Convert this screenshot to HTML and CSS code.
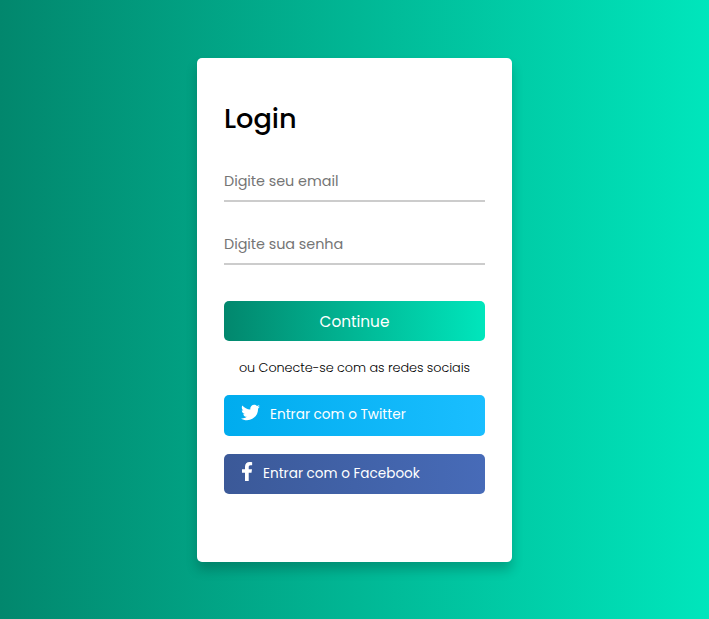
FILE: index.html
```html
<!DOCTYPE html>
<html lang="pt-BR">
<head>
<meta charset="utf-8">
<title>Login</title>
<link rel="stylesheet" href="styles.css">
</head>
<body>
<main class="card">
  <h1 class="title">Login</h1>
  <div class="field email"><span>Digite seu email</span></div>
  <div class="field password"><span>Digite sua senha</span></div>
  <button class="submit"><span>Continue</span></button>
  <p class="alt"><span>ou Conecte-se com as redes sociais</span></p>
  <a class="social twitter">
    <svg class="bird" viewBox="0 0 512 512"><path d="M459.4 151.7c.3 4.500.3 9.100.3 13.600 0 138.700-105.600 298.600-298.600 298.600-59.500 0-114.700-17.200-161.100-47.100 8.400 1 16.600 1.300 25.300 1.300 49.100 0 94.200-16.600 130.300-44.800-46.100-1-84.800-31.200-98.100-72.800 6.500 1 13 1.600 19.800 1.600 9.400 0 18.800-1.300 27.600-3.600-48.100-9.700-84.100-52-84.100-103v-1.300c14 7.800 30.200 12.700 47.400 13.300-28.300-18.800-46.800-51-46.800-87.400 0-19.500 5.200-37.400 14.300-53 51.700 63.700 129.300 105.300 216.400 109.800-1.600-7.800-2.600-15.900-2.600-24 0-57.800 46.800-104.900 104.900-104.900 30.200 0 57.500 12.700 76.700 33.100 23.700-4.500 46.500-13.300 66.600-25.300-7.800 24.400-24.400 44.800-46.100 57.800 21.100-2.300 41.600-8.100 60.400-16.200-14.300 20.800-32.200 39.300-52.600 54.300z"/></svg>
    <span>Entrar com o Twitter</span>
  </a>
  <a class="social facebook">
    <svg class="f" viewBox="22.900 0 270.400 512"><path d="M279.100 288l14.200-92.700h-88.900v-60.100c0-25.300 12.400-50.100 52.200-50.100h40.400V6.300S260.400 0 225.400 0c-73.200 0-121.100 44.400-121.100 124.700v70.600H22.900V288h81.400v224h100.200V288z"/></svg>
    <span>Entrar com o Facebook</span>
  </a>
</main>
</body>
</html>
```
FILE: styles.css
```css
* { box-sizing: border-box; margin: 0; padding: 0; }
body {
  height: 619px;
  display: flex;
  align-items: flex-start;
  justify-content: center;
  padding-top: 58px;
  background: linear-gradient(to right, #02876d, #00e6bc);
  font-family: Poppins, "Open Sans", sans-serif;
}
.card {
  width: 315px;
  height: 504px;
  padding: 40px 27px;
  display: flex;
  flex-direction: column;
  background: #fff;
  border-radius: 5px;
  box-shadow: 0 8px 12px rgba(0, 0, 0, .2);
}
.card span { white-space: nowrap; }
.title { height: 42px; line-height: 42px; font-size: 27.200px; font-weight: 500; }
.field {
  height: 42px;
  line-height: 42px;
  margin-top: 20px;
  border-bottom: 2px solid #ccc;
  color: #757575;
  font-size: 14.400px;
  letter-spacing: -.04px;
}
.password { margin-top: 21px; }
.submit {
  height: 40px;
  margin-top: 36px;
  border: 0;
  border-radius: 5px;
  background: linear-gradient(to right, #02876d, #00e6bc);
  color: #fff;
  font-family: inherit;
  font-size: 15.300px;
}
.alt { margin-top: 17px; height: 20px; line-height: 20px; text-align: center; font-size: 12.800px; font-weight: 300; letter-spacing: -.06px; }
.social {
  display: flex;
  align-items: center;
  height: 41px;
  margin-top: 17px;
  padding: 0 0 2px 17px;
  gap: 10px;
  border-radius: 5px;
  color: #fff;
  font-size: 13.600px;
}
.social svg { fill: #fff; margin-bottom: 4px; }
.bird { width: 19px; height: 19px; }
.f { width: 12px; height: 19px; }
.twitter { background: linear-gradient(to right, #00acee, #1abeff); }
.facebook { height: 40px; margin-top: 18px; padding-bottom: 1px; background: linear-gradient(to right, #3b5998, #476bb8); }
```
